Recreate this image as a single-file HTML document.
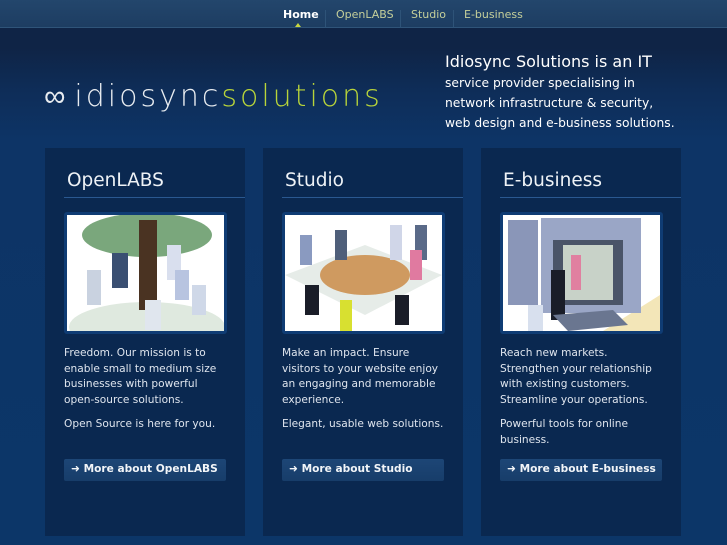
<!DOCTYPE html>
<html><head><meta charset="utf-8"><style>
*{margin:0;padding:0;box-sizing:border-box}
body{width:727px;height:545px;overflow:hidden;font-family:"DejaVu Sans","Liberation Sans",sans-serif;background:linear-gradient(#0f2446 0px,#0f2446 48px,#0e2d58 90px,#0d3466 140px,#0c3668 545px);position:relative;color:#dfe6ef}
#nav{position:absolute;left:0;top:0;width:727px;height:28px;background:linear-gradient(#23466c,#1d3d62);border-bottom:1px solid #2f5479}
#nav a{position:absolute;top:8px;font-size:11px;color:#c5cf9a;text-decoration:none}
#nav .sep{position:absolute;top:10px;width:1px;height:18px;background:#2e5378}
.logo{position:absolute;left:44px;top:79px;font-size:30px;letter-spacing:3px;font-family:"DejaVu Sans",sans-serif;font-weight:200;white-space:nowrap}
.tag{position:absolute;left:445px;top:52px;color:#fff;font-size:12.3px;line-height:20px;white-space:nowrap}
.col{position:absolute;top:148px;width:200px;height:388px;background:#0a2850}
.col h2{position:absolute;left:22px;top:22px;font-weight:normal;font-size:18.5px;color:#eef2f6}
.col .ln{position:absolute;left:19px;top:49px;width:181px;height:1px;background:#2a5890}
.col .fr{position:absolute;left:19px;top:64px;width:163px;height:122px;background:#0f3c74;border-radius:3px;padding:3px}
.col .fr svg{display:block;width:157px;height:116px;background:#fff}
.col p{position:absolute;left:19px;font-size:10.6px;line-height:15.5px;color:#dfe5ee;width:160px}
.col .btn{position:absolute;left:19px;top:311px;width:162px;height:22px;background:linear-gradient(#1d4676,#173d6a);border-radius:2px;font-size:10.6px;font-weight:bold;color:#f2f5f8;padding:4px 0 0 7px;white-space:nowrap}
</style></head><body>
<div id="nav">
<a style="left:283px;color:#fff;font-weight:bold">Home</a>
<div style="position:absolute;left:295px;top:23px;width:0;height:0;border-left:3px solid transparent;border-right:3px solid transparent;border-bottom:4px solid #c8d640"></div>
<div class="sep" style="left:325px"></div>
<a style="left:336px">OpenLABS</a>
<div class="sep" style="left:400px"></div>
<a style="left:411px">Studio</a>
<div class="sep" style="left:453px"></div>
<a style="left:464px">E-business</a>
</div>
<div class="logo"><span style="color:#e8ecf0">&#x221E;&#x200A;idiosync</span><span style="color:#b8d43a">solutions</span></div>
<div class="tag"><span style="font-size:16px">Idiosync Solutions is an IT</span><br>service provider specialising in<br>network infrastructure &amp; security,<br>web design and e-business solutions.</div>

<div class="col" style="left:45px">
<h2>OpenLABS</h2><div class="ln"></div>
<div class="fr"><svg viewBox="0 0 157 116"><ellipse cx="80" cy="112" rx="78" ry="25" fill="#dfe9df"/><ellipse cx="80" cy="20" rx="65" ry="22" fill="#7aa77c"/><rect x="72" y="5" width="18" height="90" fill="#4a3322"/><rect x="20" y="55" width="14" height="35" fill="#c9d2e0"/><rect x="45" y="38" width="16" height="35" fill="#3a4f72"/><rect x="100" y="30" width="14" height="35" fill="#d9dfee"/><rect x="108" y="55" width="14" height="30" fill="#b8c4e0"/><rect x="125" y="70" width="14" height="30" fill="#cfd8e8"/><rect x="78" y="85" width="16" height="30" fill="#e0e6ee"/></svg></div>
<p style="top:198px">Freedom. Our mission is to enable small to medium size businesses with powerful open-source solutions.</p>
<p style="top:269px">Open Source is here for you.</p>
<div class="btn">&#10140; More about OpenLABS</div>
</div>

<div class="col" style="left:263px">
<h2>Studio</h2><div class="ln"></div>
<div class="fr"><svg viewBox="0 0 157 116"><path d="M0 60 L80 30 L157 60 L80 100Z" fill="#e6ece8"/><ellipse cx="80" cy="60" rx="45" ry="20" fill="#cf9a60"/><rect x="15" y="20" width="12" height="30" fill="#8a9ac0"/><rect x="50" y="15" width="12" height="30" fill="#4f5f7a"/><rect x="105" y="10" width="12" height="35" fill="#d0d6e8"/><rect x="130" y="10" width="12" height="35" fill="#5a6a88"/><rect x="55" y="85" width="12" height="31" fill="#d8e030"/><rect x="20" y="70" width="14" height="30" fill="#1a1d28"/><rect x="110" y="80" width="14" height="30" fill="#1a1d28"/><rect x="125" y="35" width="12" height="30" fill="#e07aa0"/></svg></div>
<p style="top:198px">Make an impact. Ensure visitors to your website enjoy an engaging and memorable experience.</p>
<p style="top:269px;white-space:nowrap">Elegant, usable web solutions.</p>
<div class="btn">&#10140; More about Studio</div>
</div>

<div class="col" style="left:481px">
<h2>E-business</h2><div class="ln"></div>
<div class="fr"><svg viewBox="0 0 157 116"><path d="M100 116 L157 80 L157 116Z" fill="#f3e6b8"/><rect x="5" y="5" width="30" height="85" fill="#8a96b8"/><rect x="38" y="3" width="100" height="95" fill="#9aa6c6"/><rect x="50" y="25" width="70" height="65" fill="#4a5468"/><rect x="60" y="30" width="50" height="55" fill="#c8d2c8"/><rect x="68" y="40" width="10" height="35" fill="#e080a0"/><rect x="48" y="55" width="14" height="50" fill="#1a1d28"/><path d="M50 100 L110 95 L125 110 L65 116Z" fill="#6a7690"/><rect x="25" y="90" width="15" height="26" fill="#d8e0ee"/></svg></div>
<p style="top:198px">Reach new markets. Strengthen your relationship with existing customers. Streamline your operations.</p>
<p style="top:269px">Powerful tools for online business.</p>
<div class="btn">&#10140; More about E-business</div>
</div>
</body></html>
